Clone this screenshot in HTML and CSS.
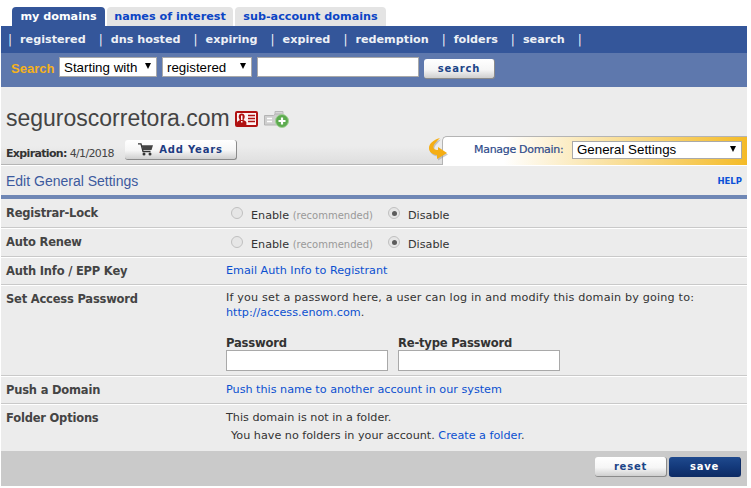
FILE: index.html
```html
<!DOCTYPE html>
<html lang="en">
<head>
<meta charset="utf-8">
<title>Domain settings</title>
<link rel="stylesheet" href="styles.css">
</head>
<body>
<div class="page">
  <div class="tabs">
    <a class="tab tab-active">my domains</a>
    <a class="tab">names of interest</a>
    <a class="tab">sub-account domains</a>
  </div>
  <nav class="subnav">
    <span class="sep">|</span><a>registered</a>
    <span class="sep">|</span><a>dns hosted</a>
    <span class="sep">|</span><a>expiring</a>
    <span class="sep">|</span><a>expired</a>
    <span class="sep">|</span><a>redemption</a>
    <span class="sep">|</span><a>folders</a>
    <span class="sep">|</span><a>search</a>
    <span class="sep">|</span>
  </nav>
  <div class="searchbar">
    <span class="search-label">Search</span>
    <div class="fake-select sel-a"><span>Starting with</span><i class="caret"></i></div>
    <div class="fake-select sel-b"><span>registered</span><i class="caret"></i></div>
    <div class="search-input"></div>
    <button class="btn btn-search">search</button>
  </div>
  <main class="content">
    <div class="domain-row">
      <h1 class="domain">seguroscorretora.com</h1>
      <svg class="ico-id" width="23" height="16" viewBox="0 0 23 16"><rect x="1" y="1" width="21" height="14" rx="1" fill="#fdf3f3" stroke="#b01212" stroke-width="2"/><path d="M2 14v-2.500c0-1.500 2-2 3-2.600-.9-1-1.300-2-1.300-3.400C3.700 3.500 5 2.500 6.700 2.500s3 1 3 3c0 1.400-.4 2.400-1.300 3.400 1 .6 3 1.100 3 2.600V14z" fill="#b01212"/><rect x="6" y="4.500" width="1.500" height="4.500" fill="#fff"/><rect x="6" y="10" width="1.500" height="1.500" fill="#fff"/><path d="M13 4.500h7M13 7.500h7M13 10.500h7" stroke="#b01212" stroke-width="1.400"/></svg>
      <svg class="ico-folder" width="25" height="17" viewBox="0 0 25 17"><path d="M11 3V.5h8v6h-8z" fill="#d6d6d6" stroke="#b8b8b8"/><path d="M.5 4.500h9l2-1.500h7v11H.5z" fill="#cfcfcf" stroke="#b4b4b4"/><path d="M3 7.500h5M3 10.500h5" stroke="#fff" stroke-width="1.400"/><circle cx="18" cy="10" r="6.500" fill="#5dab4f" stroke="#a2d096"/><path d="M18 6.500v7M14.500 10h7" stroke="#fff" stroke-width="2.200"/></svg>
    </div>
    <div class="expiry-row">
      <span class="expiry"><b>Expiration:</b> 4/1/2018</span>
      <button class="btn btn-years">
        <svg width="15" height="13" viewBox="0 0 15 13"><path d="M0 .8h3l2 7.700h7.500" fill="none" stroke="#333" stroke-width="1.300"/><path d="M3.500 2.200H15l-1.500 4.800H5z" fill="#444"/><circle cx="6" cy="11" r="1.500" fill="#333"/><circle cx="12" cy="11" r="1.500" fill="#333"/></svg>
        <span>Add Years</span>
      </button>
      <div class="manage">
        <svg class="ico-arrow" width="22" height="24" viewBox="0 0 22 24"><path d="M12 0C5 2 1 6 1 10c0 4 3 6.500 8 7v4l10-6-9-6v3c-3 0-5-1-4.500-4C6 6 9 3 12 0z" fill="#8f8f8f" opacity=".45" transform="translate(1 1.500)"/><path d="M12 0C5 2 1 6 1 10c0 4 3 6.500 8 7v4l10-6-9-6v3c-3 0-5-1-4.500-4C6 6 9 3 12 0z" fill="#f5ae14"/></svg>
        <span class="manage-label">Manage Domain:</span>
        <div class="fake-select sel-manage"><span>General Settings</span><i class="caret"></i></div>
      </div>
    </div>
    <div class="section-head">
      <span class="section-title">Edit General Settings</span>
      <a class="help">HELP</a>
    </div>
    <div class="row row-short">
      <div class="label">Registrar-Lock</div>
      <div class="value radios">
        <i class="radio"></i><span class="opt">Enable <em>(recommended)</em></span>
        <i class="radio radio-on"></i><span>Disable</span>
      </div>
    </div>
    <div class="row row-short">
      <div class="label">Auto Renew</div>
      <div class="value radios">
        <i class="radio"></i><span class="opt">Enable <em>(recommended)</em></span>
        <i class="radio radio-on"></i><span>Disable</span>
      </div>
    </div>
    <div class="row row-auth">
      <div class="label">Auth Info / EPP Key</div>
      <div class="value"><a class="link">Email Auth Info to Registrant</a></div>
    </div>
    <div class="row row-pass">
      <div class="label">Set Access Password</div>
      <div class="value value-pass">
        <p class="para para-wide">If you set a password here, a user can log in and modify this domain by going to:<br><a class="link">http://access.enom.com</a>.</p>
        <div class="pass-fields">
          <label class="field"><b>Password</b><span class="text-input"></span></label>
          <label class="field"><b>Re-type Password</b><span class="text-input"></span></label>
        </div>
      </div>
    </div>
    <div class="row row-auth">
      <div class="label">Push a Domain</div>
      <div class="value"><a class="link">Push this name to another account in our system</a></div>
    </div>
    <div class="row row-last">
      <div class="label">Folder Options</div>
      <div class="value value-folder">
        <p class="para">This domain is not in a folder.</p>
        <p class="para para-indent">You have no folders in your account. <a class="link">Create a folder</a>.</p>
      </div>
    </div>
  </main>
  <footer class="actions">
    <button class="btn btn-reset">reset</button>
    <button class="btn btn-save">save</button>
  </footer>
</div>
</body>
</html>
```
FILE: styles.css
```css
* { box-sizing: border-box; }
html, body { margin: 0; padding: 0; background: #fff; }
body { font-family: "DejaVu Sans", sans-serif; font-size: 12px; color: #333; }
.page { width: 746px; margin-left: 1px; }
p { margin: 0; }

.tabs { display: flex; height: 26px; padding: 7px 0 0 11px; gap: 2px; }
.tab { height: 19px; display: flex; align-items: center; justify-content: center; background: #e4e4e4; color: #0b45c4; font-size: 11.2px; font-weight: bold; border-radius: 4px 4px 0 0; }
.tab:nth-child(2) { width: 126px; }
.tab:nth-child(3) { width: 151px; }
.tab-active { width: 93px; background: #34569a; color: #fff; }

.subnav { height: 27px; background: #34569a; display: flex; align-items: center; padding: 0 0 0 7px; color: #eef1f6; font-size: 11.2px; font-weight: bold; }
.subnav a { margin-left: 8px; margin-right: 13px; }
.sep { font-weight: normal; font-size: 12px; }

.searchbar { height: 34px; background: #5e78ad; display: flex; align-items: flex-start; padding: 4px 0 0 10px; }
.search-label { color: #f6b21b; font-family: "Liberation Sans", sans-serif; font-weight: bold; font-size: 13px; line-height: 20px; width: 48px; margin-top: 2px; }
.fake-select { display: flex; align-items: center; justify-content: space-between; background: #fff; border: 1px solid #a9a9a9; font-family: "Liberation Sans", sans-serif; font-size: 13.33px; color: #000; height: 20px; padding: 0 5px 0 4px; }
.caret { width: 0; height: 0; border-left: 3.5px solid transparent; border-right: 3.5px solid transparent; border-top: 6px solid #000; margin-top: -2px; }
.sel-a { width: 98px; margin-right: 5px; }
.sel-b { width: 90px; margin-right: 5px; }
.search-input { width: 162px; height: 20px; background: #fff; border: 1px solid #a9a9a9; margin-right: 5px; }

.btn { display: inline-flex; align-items: center; justify-content: center; gap: 6px; border: 0; border-right: 1px solid #8b8b8b; border-bottom: 1px solid #8b8b8b; border-radius: 3px; background: linear-gradient(#fff 0%, #f6f6f6 55%, #cfcfcf 100%); color: #1b4487; font-family: "DejaVu Sans", sans-serif; font-weight: bold; font-size: 10px; letter-spacing: .8px; padding: 0; }
.btn-search { width: 71px; height: 20px; margin-top: 2px; }

.content { background: #ececec; height: 364px; }
.domain-row { height: 47px; display: flex; align-items: flex-end; padding: 0 0 2px 5px; }
.domain { margin: 0; font-family: "Liberation Sans", sans-serif; font-weight: normal; font-size: 23px; line-height: 28px; color: #444; }
.ico-id { margin: 0 0 5px 5px; }
.ico-folder { margin: 0 0 4px 6px; }

.expiry-row { height: 31px; display: flex; align-items: flex-start; position: relative; border-bottom: 1px solid #b5b5b5; box-shadow: 0 1px 0 #fff; padding-left: 5px; background: linear-gradient(#ececec 40%, #dedede 100%); }
.expiry { font-size: 11px; margin-top: 13px; width: 119px; color: #444; letter-spacing: -.65px; }
.expiry b { color: #333; }
.btn-years { width: 112px; height: 20px; margin-top: 6px; color: #1d3b82; }
.manage { position: absolute; left: 441px; top: 2px; width: 305px; height: 29px; border: 1px solid #b4b4b4; border-width: 1px 0 0 1px; border-radius: 5px 0 0 0; background: linear-gradient(90deg, #fff 0%, #fff 20%, #fae5ad 50%, #f4bb28 100%); display: flex; align-items: center; padding: 0 0 3px 31px; }
.ico-arrow { position: absolute; left: -15px; top: 1px; }
.manage-label { font-size: 11px; color: #2e4a8a; width: 98px; letter-spacing: -.3px; -webkit-text-stroke: .2px #2e4a8a; }
.sel-manage { width: 170px; height: 18px; padding: 0 5px 0 4px; }

.section-head { height: 34px; display: flex; align-items: center; justify-content: space-between; padding: 1px 5px 0 5px; border-bottom: 4px solid #6f87b5; }
.section-title { font-family: "Liberation Sans", sans-serif; font-size: 14px; color: #3c5a9e; }
.help { font-size: 8.5px; font-weight: bold; color: #0b50d8; }

.row { display: grid; grid-template-columns: 220px 1fr; border-bottom: 1px solid #c9c9c9; box-shadow: 0 1px 0 #fff; padding-left: 5px; }
.row-short { height: 29px; align-items: center; }
.row-auth { height: 28px; align-items: center; }
.row-pass { height: 91px; padding-top: 7px; }
.row-last { border: 0; box-shadow: none; padding-top: 7px; }
.label { font-size: 11.5px; font-weight: bold; color: #444; letter-spacing: -.2px; }
.value { font-size: 11.2px; color: #333; }
.value-pass { margin-top: -2px; }
.value-folder { margin-top: -1px; }
.link { color: #0b50d0; }
.para { line-height: 15px; }
.para-wide { letter-spacing: .17px; }
.para-wide .link { letter-spacing: 0; }
.para-indent { margin: 3px 0 0 5px; }

.radios { display: flex; align-items: center; padding-left: 5px; padding-top: 4px; }
.radio { width: 12px; height: 12px; border-radius: 50%; border: 1px solid #c0c0c0; background: #e6e6e6; margin-right: 8px; position: relative; margin-top: -4px; }
.radio-on::after { content: ""; position: absolute; inset: 2.500px; border-radius: 50%; background: #5c5c5c; }
.opt { width: 137px; }
.opt em { font-style: normal; color: #999; font-size: 10px; }

.pass-fields { display: flex; gap: 10px; margin-top: 16px; }
.field { display: flex; flex-direction: column; width: 162px; }
.field b { font-size: 11.6px; line-height: 14px; color: #333; letter-spacing: -.2px; }
.text-input { display: block; height: 21px; background: #fff; border: 1px solid #a9a9a9; }

.actions { height: 35px; background: #cacaca; display: flex; justify-content: flex-end; align-items: center; gap: 2px; padding: 0 6px 0 0; }
.btn-reset { width: 72px; height: 20px; margin-top: -3px; }
.btn-save { width: 72px; height: 20px; margin-top: -3px; background: linear-gradient(#1f4a8e 0%, #143a7c 50%, #0e2c66 100%); color: #fff; border-color: #0e2c66; }
```
